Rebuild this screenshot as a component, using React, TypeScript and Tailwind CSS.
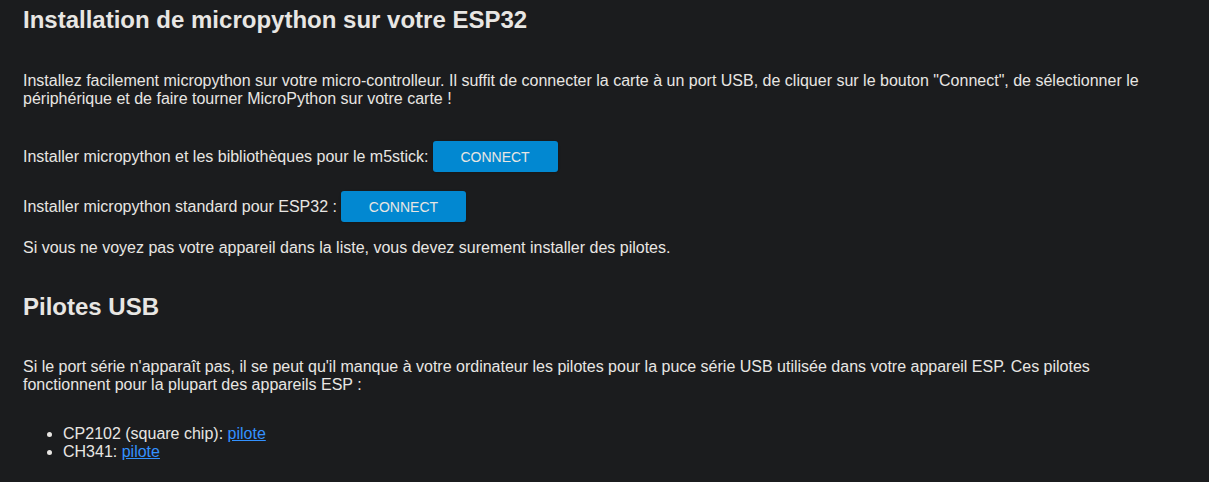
export default function App() {
	return (
		<div
			className="min-h-[482px] bg-[#1b1c1e] px-[23px] pt-[6px] pb-4 text-[#e8e6e3] text-[16px] leading-[18px]"
			style={{ fontFamily: '"Liberation Sans", Arial, sans-serif' }}
		>
			<h1 className="text-[24px] leading-[28px] font-bold">
				Installation de micropython sur votre ESP32
			</h1>

			<p className="mt-[38px] max-w-[1140px]">
				Installez facilement micropython sur votre micro-controlleur. Il suffit de connecter la carte à un port USB, de
				cliquer sur le bouton "Connect", de sélectionner le périphérique et de faire tourner MicroPython sur votre carte !
			</p>

			<div className="mt-[33px] flex items-center gap-[4px]">
				<span>Installer micropython et les bibliothèques pour le m5stick:</span>
				<button className="h-[31px] w-[125px] rounded-[3px] bg-[#0288d1] text-[14px] text-[#e8e6e3] shadow-sm">
					CONNECT
				</button>
			</div>

			<div className="mt-[19px] flex items-center gap-[4px]">
				<span>Installer micropython standard pour ESP32 :</span>
				<button className="h-[31px] w-[125px] rounded-[3px] bg-[#0288d1] text-[14px] text-[#e8e6e3] shadow-sm">
					CONNECT
				</button>
			</div>

			<p className="mt-[17px]">
				Si vous ne voyez pas votre appareil dans la liste, vous devez surement installer des pilotes.
			</p>

			<h2 className="mt-[36px] text-[24px] leading-[28px] font-bold">Pilotes USB</h2>

			<p className="mt-[37px] max-w-[1140px]">
				Si le port série n'apparaît pas, il se peut qu'il manque à votre ordinateur les pilotes pour la puce série USB
				utilisée dans votre appareil ESP. Ces pilotes fonctionnent pour la plupart des appareils ESP :
			</p>

			<ul className="mt-[31px] list-disc pl-[40px]">
				<li>
					CP2102 (square chip):{" "}
					<a href="#" className="text-[#3391ff] underline">
						pilote
					</a>
				</li>
				<li>
					CH341:{" "}
					<a href="#" className="text-[#3391ff] underline">
						pilote
					</a>
				</li>
			</ul>
		</div>
	)
}
